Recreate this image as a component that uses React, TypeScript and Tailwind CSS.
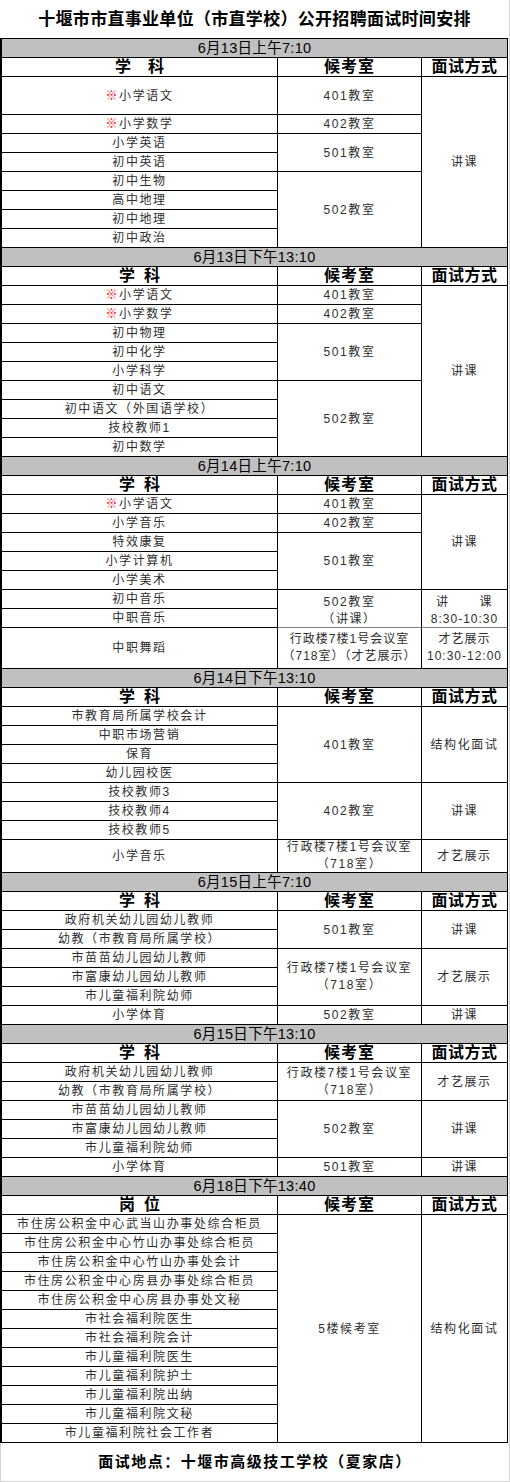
import React from "react";

type Cell = { col: "L" | "M" | "R"; content: React.ReactNode; cls?: string };

const base = "flex items-center justify-center border-b border-r border-black text-center";
const body = "text-[12px] tracking-[1.6px] text-[#2e2e2e] leading-[16px]";

const L = (t: string, mark = false): Cell => ({
  col: "L",
  content: (
    <span>
      {mark && <span className="text-[#ff0000]">※</span>}
      {t}
    </span>
  ),
});
const M = (c: React.ReactNode, cls = ""): Cell => ({ col: "M", content: c, cls });
const R = (c: React.ReactNode, cls = ""): Cell => ({ col: "R", content: c, cls });

const two = (a: string, b: string) => (
  <div className="flex flex-col items-center leading-[17px]">
    <span>{a}</span>
    <span>{b}</span>
  </div>
);

type Section = {
  title: string;
  rows: string;
  header: "xk" | "xkWide" | "gw";
  cells: Cell[];
};

const sections: Section[] = [
  {
    title: "6月13日上午7:10",
    rows: "grid-rows-[19px_19px_38px_19px_19px_19px_19px_19px_19px_19px]",
    header: "xkWide",
    cells: [
      L("小学语文", true), M("401教室"), R("讲课", "row-span-8"),
      L("小学数学", true), M("402教室"),
      L("小学英语"), M("501教室", "row-span-2"),
      L("初中英语"),
      L("初中生物"), M("502教室", "row-span-4"),
      L("高中地理"),
      L("初中地理"),
      L("初中政治"),
    ],
  },
  {
    title: "6月13日下午13:10",
    rows: "grid-rows-[19px_19px_19px_19px_19px_19px_19px_19px_19px_19px_19px]",
    header: "xk",
    cells: [
      L("小学语文", true), M("401教室"), R("讲课", "row-span-9"),
      L("小学数学", true), M("402教室"),
      L("初中物理"), M("501教室", "row-span-3"),
      L("初中化学"),
      L("小学科学"),
      L("初中语文"), M("502教室", "row-span-4"),
      L("初中语文（外国语学校）"),
      L("技校教师1"),
      L("初中数学"),
    ],
  },
  {
    title: "6月14日上午7:10",
    rows: "grid-rows-[19px_19px_19px_19px_19px_19px_19px_19px_19px_41px]",
    header: "xk",
    cells: [
      L("小学语文", true), M("401教室"), R("讲课", "row-span-5"),
      L("小学音乐"), M("402教室"),
      L("特效康复"), M("501教室", "row-span-3"),
      L("小学计算机"),
      L("小学美术"),
      L("初中音乐"),
      M(<div className="pt-[4px]">{two("502教室", "（讲课）")}</div>, "row-span-2 !border-b-[#808080]"),
      R(
        <div className="flex w-full flex-col pt-[4px] leading-[17px]">
          <div className="flex justify-between px-[14px]">
            <span>讲</span>
            <span>课</span>
          </div>
          <span className="tracking-[1px]">8:30-10:30</span>
        </div>,
        "row-span-2 !border-b-[#808080]"
      ),
      L("中职音乐"),
      L("中职舞蹈"),
      M(<div className="tracking-[1px]">{two("行政楼7楼1号会议室", "（718室）（才艺展示）")}</div>),
      R(<div className="tracking-[1px]">{two("才艺展示", "10:30-12:00")}</div>),
    ],
  },
  {
    title: "6月14日下午13:10",
    rows: "grid-rows-[19px_19px_19px_19px_19px_19px_19px_19px_19px_33px]",
    header: "xk",
    cells: [
      L("市教育局所属学校会计"), M("401教室", "row-span-4"), R("结构化面试", "row-span-4"),
      L("中职市场营销"),
      L("保育"),
      L("幼儿园校医"),
      L("技校教师3"), M("402教室", "row-span-3"), R("讲课", "row-span-3"),
      L("技校教师4"),
      L("技校教师5"),
      L("小学音乐"), M(two("行政楼7楼1号会议室", "（718室）")), R("才艺展示"),
    ],
  },
  {
    title: "6月15日上午7:10",
    rows: "grid-rows-[19px_19px_19px_19px_19px_19px_19px_19px]",
    header: "xk",
    cells: [
      L("政府机关幼儿园幼儿教师"), M("501教室", "row-span-2"), R("讲课", "row-span-2"),
      L("幼教（市教育局所属学校）"),
      L("市苗苗幼儿园幼儿教师"), M(two("行政楼7楼1号会议室", "（718室）"), "row-span-3"), R("才艺展示", "row-span-3"),
      L("市富康幼儿园幼儿教师"),
      L("市儿童福利院幼师"),
      L("小学体育"), M("502教室"), R("讲课"),
    ],
  },
  {
    title: "6月15日下午13:10",
    rows: "grid-rows-[19px_19px_19px_19px_19px_19px_19px_19px]",
    header: "xk",
    cells: [
      L("政府机关幼儿园幼儿教师"), M(two("行政楼7楼1号会议室", "（718室）"), "row-span-2"), R("才艺展示", "row-span-2"),
      L("幼教（市教育局所属学校）"),
      L("市苗苗幼儿园幼儿教师"), M("502教室", "row-span-3"), R("讲课", "row-span-3"),
      L("市富康幼儿园幼儿教师"),
      L("市儿童福利院幼师"),
      L("小学体育"), M("501教室"), R("讲课"),
    ],
  },
  {
    title: "6月18日下午13:40",
    rows: "grid-rows-[19px_19px_19px_19px_19px_19px_19px_19px_19px_19px_19px_19px_19px_19px]",
    header: "gw",
    cells: [
      L("市住房公积金中心武当山办事处综合柜员"), M("5楼候考室", "row-span-12"), R("结构化面试", "row-span-12"),
      L("市住房公积金中心竹山办事处综合柜员"),
      L("市住房公积金中心竹山办事处会计"),
      L("市住房公积金中心房县办事处综合柜员"),
      L("市住房公积金中心房县办事处文秘"),
      L("市社会福利院医生"),
      L("市社会福利院会计"),
      L("市儿童福利院医生"),
      L("市儿童福利院护士"),
      L("市儿童福利院出纳"),
      L("市儿童福利院文秘"),
      L("市儿童福利院社会工作者"),
    ],
  },
];

function SectionGrid({ s }: { s: Section }) {
  const hdr = "flex items-center justify-center border-b border-r border-black text-[16px] font-bold text-black leading-[18px]";
  return (
    <div className={`grid grid-cols-[276px_144px_86px] ${s.rows}`}>
      <div className="col-span-3 flex items-center justify-center border-b border-r border-black bg-[#c0c0c0] text-[14.5px] tracking-[0.3px] leading-[18px] text-black">
        {s.title}
      </div>
      <div className={hdr}>
        {s.header === "gw" ? (
          <div className="flex gap-[9px]">
            <span>岗</span>
            <span>位</span>
          </div>
        ) : (
          <div className={`flex ${s.header === "xkWide" ? "gap-[17px]" : "gap-[9px]"}`}>
            <span>学</span>
            <span>科</span>
          </div>
        )}
      </div>
      <div className={`${hdr} tracking-[1px]`}>候考室</div>
      <div className={`${hdr} tracking-[0.5px]`}>面试方式</div>
      {s.cells.map((c, i) => (
        <div key={i} className={`${base} ${body} ${c.cls ?? ""}`}>
          {c.content}
        </div>
      ))}
    </div>
  );
}

export default function App() {
  return (
    <div className="h-[1482px] w-[510px] border-r border-[#d4d4d4] bg-white font-['Liberation_Sans','Noto_Sans_CJK_SC',sans-serif]">
      <div className="flex h-[38px] items-center justify-center pt-[2px] text-[17px] font-bold tracking-[0.3px] text-black">
        十堰市市直事业单位（市直学校）公开招聘面试时间安排
      </div>
      <div className="w-[508px] border-l-2 border-t border-black">
        {sections.map((s, i) => (
          <SectionGrid key={i} s={s} />
        ))}
      </div>
      <div className="flex h-[39px] w-[509px] items-center justify-center border-b border-l border-[#d4d4d4] text-[15px] font-bold tracking-[1.5px] text-black">
        面试地点：十堰市高级技工学校（夏家店）
      </div>
    </div>
  );
}
